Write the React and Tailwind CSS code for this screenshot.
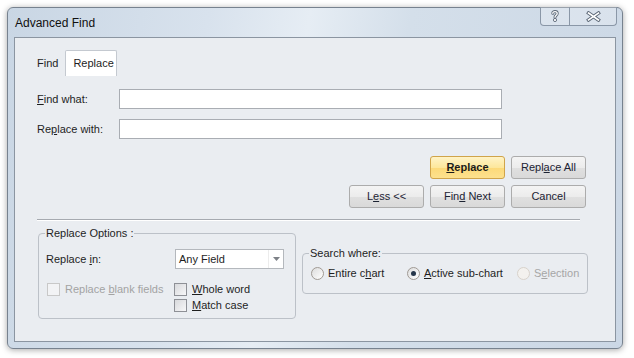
import React from "react";

function Btn({ children, primary }) {
  return (
    <button
      className={
        "w-[75px] h-[23px] rounded-[3px] border text-[11px] flex items-center justify-center " +
        (primary
          ? "border-[#d0a44a] bg-[linear-gradient(#fff3c6_0%,#fde79c_50%,#fcd978_51%,#fde18e_100%)] font-bold text-[#1a1a1a]"
          : "border-[#acacac] bg-[linear-gradient(#f4f4f4_0%,#ececec_50%,#e0e0e0_51%,#d9d9d9_100%)] text-[#1c2333]")
      }
    >
      <span>{children}</span>
    </button>
  );
}

function Check({ children, disabled }) {
  return (
    <div className={"flex items-center h-[16px] " + (disabled ? "text-[#a3a3a3]" : "")}>
      <span
        className={
          "w-[13px] h-[13px] border " +
          (disabled
            ? "border-[#c8c8c8] bg-[#f2f3f5]"
            : "border-[#8e9096] bg-[linear-gradient(135deg,#d8d9dc,#f7f7f8)]")
        }
      />
      <span className="ml-[5px]">{children}</span>
    </div>
  );
}

function Radio({ children, checked, disabled, w }) {
  return (
    <div className={"flex items-center h-[16px] " + w + (disabled ? " text-[#a6a6a6]" : "")}>
      <span
        className={
          "w-[13px] h-[13px] rounded-full border flex items-center justify-center " +
          (disabled
            ? "border-[#d8d2cb] bg-[#f3f1ee]"
            : "border-[#a09a94] bg-[linear-gradient(135deg,#dcdcdc,#ffffff)]")
        }
      >
        {checked && <span className="w-[5px] h-[5px] rounded-full bg-[#26364a]" />}
      </span>
      <span className="ml-[4px]">{children}</span>
    </div>
  );
}

export default function App() {
  return (
    <div className="w-[634px] h-[358px] bg-white pl-[7px] pt-[7px] font-['Liberation_Sans',Arial,sans-serif] text-[11px] text-[#1e1e1e]">
      <div className="w-[616px] h-[342px] flex flex-col rounded-[6px] border border-[#77828f] bg-[linear-gradient(100deg,#c9d6e4_0%,#d8e2ed_30%,#e6edf4_45%,#d4dfea_60%,#cbd7e5_100%)] shadow-[0_1px_6px_rgba(0,0,0,0.35)] px-[6px] pb-[6px]">
        {/* title bar */}
        <div className="h-[29px] flex items-start shrink-0">
          <div className="self-center pl-[1px] text-[12px] text-[#101010]">Advanced Find</div>
          <div className="ml-auto -mr-px -mt-px flex h-[19px] border border-t-0 border-[#8a97a7] rounded-b-[4px] bg-white/25">
            <div className="w-[28px] flex items-center justify-center">
              <svg width="8" height="12" viewBox="0 0 8 12">
                <g fill="none" strokeLinecap="round">
                  <path d="M1.8 3.3C1.8 1 6.2 1 6.2 3.4C6.2 5.3 4 5.2 4 7.2" stroke="#5c6877" strokeWidth="3" />
                  <path d="M1.8 3.3C1.8 1 6.2 1 6.2 3.4C6.2 5.3 4 5.2 4 7.2" stroke="#fff" strokeWidth="1.3" />
                </g>
                <circle cx="4" cy="10" r="1.6" fill="#fff" stroke="#5c6877" strokeWidth="0.9" />
              </svg>
            </div>
            <div className="w-[47px] border-l border-[#8a97a7] flex items-center justify-center">
              <svg width="15" height="11" viewBox="0 0 15 11">
                <g strokeLinecap="square">
                  <path d="M2.5 2L12.5 9M12.5 2L2.5 9" stroke="#5c6877" strokeWidth="3.4" />
                  <path d="M2.5 2L12.5 9M12.5 2L2.5 9" stroke="#fff" strokeWidth="1.6" />
                </g>
              </svg>
            </div>
          </div>
        </div>

        {/* client */}
        <div className="flex-1 border border-[#8b95a1] bg-[#eaedf1] flex flex-col">
          {/* tabs */}
          <div className="mt-[12px] pl-[22px] h-[26px] flex items-center">
            <span>Find</span>
            <div className="ml-[7px] h-[26px] w-[52px] pl-[7px] flex items-center bg-white border border-b-0 border-[#c4c9d0] rounded-t-[2px]">
              Replace
            </div>
          </div>

          {/* fields */}
          <div className="mt-[13px] pl-[22px] flex flex-col gap-[10px]">
            <div className="flex items-center h-[20px]">
              <span className="w-[82px]">
                <u>F</u>ind what:
              </span>
              <div className="w-[383px] h-[20px] bg-white border border-[#a9adb3]" />
            </div>
            <div className="flex items-center h-[20px]">
              <span className="w-[82px]">
                Re<u>p</u>lace with:
              </span>
              <div className="w-[383px] h-[20px] bg-white border border-[#a9adb3]" />
            </div>
          </div>

          {/* buttons */}
          <div className="mt-[17px] pr-[29px] flex flex-col items-end gap-[6px]">
            <div className="flex gap-[6px]">
              <Btn primary>
                <u>R</u>eplace
              </Btn>
              <Btn>
                Repl<u>a</u>ce All
              </Btn>
            </div>
            <div className="flex gap-[6px]">
              <Btn>
                L<u>e</u>ss &lt;&lt;
              </Btn>
              <Btn>
                Fin<u>d</u> Next
              </Btn>
              <Btn>Cancel</Btn>
            </div>
          </div>

          {/* separator */}
          <div className="mt-[11px] ml-[22px] w-[543px] border-t border-[#a6aab0] border-b border-b-white" />

          {/* groups */}
          <div className="mt-[6px] pl-[23px] flex items-start gap-[6px]">
            <fieldset className="w-[258px] border border-[#bcc1c8] rounded-[4px] pl-[6px] pb-[5px]">
              <legend className="px-[1px] leading-[13px]">Replace Options :</legend>
              <div className="mt-[9px] flex items-center h-[20px]">
                <span className="w-[130px] pl-[1px]">
                  Replace <u>i</u>n:
                </span>
                <div className="w-[109px] h-[20px] bg-white border border-[#b4b8bd] flex items-center">
                  <span className="flex-1 pl-[3px]">Any Field</span>
                  <span className="w-[15px] h-full border-l border-[#ececec] flex items-center justify-center">
                    <svg width="7" height="4" viewBox="0 0 7 4">
                      <path d="M0 0H7L3.5 4Z" fill="#7d8187" />
                    </svg>
                  </span>
                </div>
              </div>
              <div className="mt-[12px] flex">
                <div className="w-[129px] pl-[2px]">
                  <Check disabled>
                    Replace <u>b</u>lank fields
                  </Check>
                </div>
                <div className="flex flex-col">
                  <Check>
                    <u>W</u>hole word
                  </Check>
                  <Check>
                    <u>M</u>atch case
                  </Check>
                </div>
              </div>
            </fieldset>

            <fieldset className="mt-[20px] w-[286px] border border-[#bcc1c8] rounded-[4px] pl-[6px] pb-[12px]">
              <legend className="px-[1px] leading-[13px]">Search where:</legend>
              <div className="mt-[5px] ml-[2px] flex">
                <Radio w="w-[96px]">
                  Entire c<u>h</u>art
                </Radio>
                <Radio w="w-[110px]" checked>
                  <u>A</u>ctive sub-chart
                </Radio>
                <Radio w="w-[70px]" disabled>
                  S<u>e</u>lection
                </Radio>
              </div>
            </fieldset>
          </div>
        </div>
      </div>
    </div>
  );
}
